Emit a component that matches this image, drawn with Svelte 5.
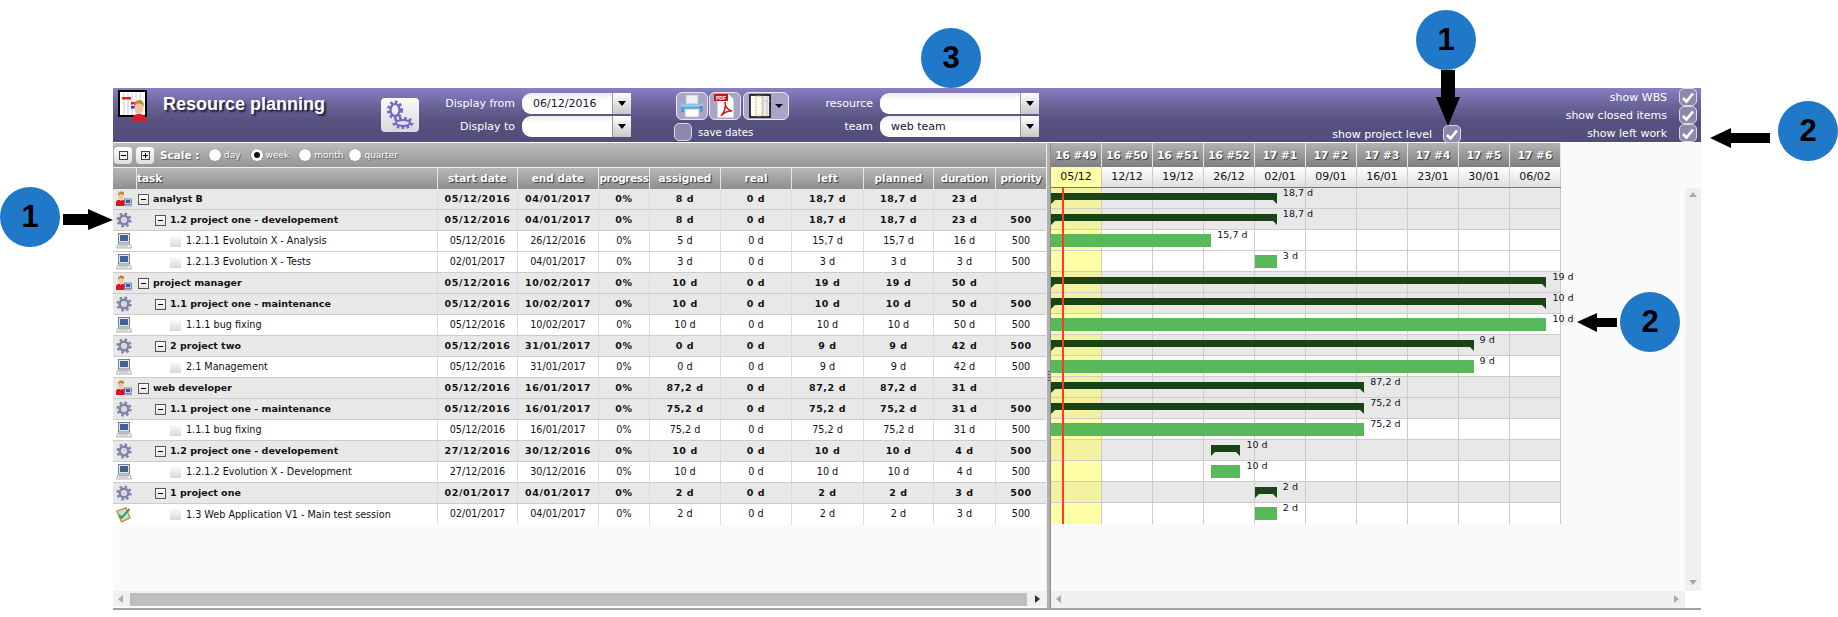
<script lang="ts">
  const DAY = 51 / 7;
  const dayIndex = (d: string) => {
    const [dd, mm, yy] = d.split("/").map(Number);
    return Math.round((Date.UTC(yy, mm - 1, dd) - Date.UTC(2016, 11, 5)) / 86400000);
  };

  // kind: res = resource, prj = project, act = activity, test = test session
  const row = (kind, level, name, start, end, assigned, left, planned, duration, priority = "500") => ({
    kind, level, name, start, end, assigned, left, planned, duration, priority,
    group: kind === "res" || kind === "prj"
  });

  const rows = [
    row("res", 0, "analyst B", "05/12/2016", "04/01/2017", "8 d", "18,7 d", "18,7 d", "23 d", ""),
    row("prj", 1, "1.2 project one - developement", "05/12/2016", "04/01/2017", "8 d", "18,7 d", "18,7 d", "23 d"),
    row("act", 2, "1.2.1.1 Evolutoin X - Analysis", "05/12/2016", "26/12/2016", "5 d", "15,7 d", "15,7 d", "16 d"),
    row("act", 2, "1.2.1.3 Evolution X - Tests", "02/01/2017", "04/01/2017", "3 d", "3 d", "3 d", "3 d"),
    row("res", 0, "project manager", "05/12/2016", "10/02/2017", "10 d", "19 d", "19 d", "50 d", ""),
    row("prj", 1, "1.1 project one - maintenance", "05/12/2016", "10/02/2017", "10 d", "10 d", "10 d", "50 d"),
    row("act", 2, "1.1.1 bug fixing", "05/12/2016", "10/02/2017", "10 d", "10 d", "10 d", "50 d"),
    row("prj", 1, "2 project two", "05/12/2016", "31/01/2017", "0 d", "9 d", "9 d", "42 d"),
    row("act", 2, "2.1 Management", "05/12/2016", "31/01/2017", "0 d", "9 d", "9 d", "42 d"),
    row("res", 0, "web developer", "05/12/2016", "16/01/2017", "87,2 d", "87,2 d", "87,2 d", "31 d", ""),
    row("prj", 1, "1.1 project one - maintenance", "05/12/2016", "16/01/2017", "75,2 d", "75,2 d", "75,2 d", "31 d"),
    row("act", 2, "1.1.1 bug fixing", "05/12/2016", "16/01/2017", "75,2 d", "75,2 d", "75,2 d", "31 d"),
    row("prj", 1, "1.2 project one - developement", "27/12/2016", "30/12/2016", "10 d", "10 d", "10 d", "4 d"),
    row("act", 2, "1.2.1.2 Evolution X - Development", "27/12/2016", "30/12/2016", "10 d", "10 d", "10 d", "4 d"),
    row("prj", 1, "1 project one", "02/01/2017", "04/01/2017", "2 d", "2 d", "2 d", "3 d"),
    row("test", 2, "1.3 Web Application V1 - Main test session", "02/01/2017", "04/01/2017", "2 d", "2 d", "2 d", "3 d")
  ];

  const weeks = [
    ["16 #49", "05/12"], ["16 #50", "12/12"], ["16 #51", "19/12"], ["16 #52", "26/12"], ["17 #1", "02/01"],
    ["17 #2", "09/01"], ["17 #3", "16/01"], ["17 #4", "23/01"], ["17 #5", "30/01"], ["17 #6", "06/02"]
  ];

  const barLeft = (r) => dayIndex(r.start) * DAY;
  const barWidth = (r) => (dayIndex(r.end) - dayIndex(r.start) + 1) * DAY;
</script>

{#snippet gear(size, fill)}
  <svg width={size} height={size} viewBox="0 0 16 16">
    <circle cx="8" cy="8" r="6.400" fill="none" stroke={fill} stroke-width="2.400" stroke-dasharray="2.500 2.500" />
    <circle cx="8" cy="8" r="4.300" fill="none" stroke={fill} stroke-width="2.600" />
    <circle cx="8" cy="8" r="2.400" fill="#d4d6e2" />
  </svg>
{/snippet}

{#snippet person()}
  <svg width="16" height="16" viewBox="0 0 16 16">
    <path d="M0 15v-3.500c0-1.600 1.400-2.500 3-2.800l2 1 2-1c1 .2 2 .8 2 2V15z" fill="#d8141c" />
    <ellipse cx="5" cy="5" rx="2.600" ry="3.400" fill="#eec79a" />
    <path d="M2.200 5C1.700 1.500 4 .5 5.500.5c2 0 3 1.500 2.500 3.500C7 3 5 3.500 3.500 3z" fill="#b8822f" />
    <rect x="8.500" y="8" width="7" height="5.500" fill="#dfe3ea" stroke="#59627a" stroke-width=".7" />
    <rect x="9.700" y="9" width="4.600" height="3.200" fill="#2f5ea8" />
    <rect x="8" y="14" width="8" height="1.500" fill="#aeb3bd" />
  </svg>
{/snippet}

{#snippet computer()}
  <svg width="16" height="16" viewBox="0 0 16 16">
    <rect x="2.500" y=".5" width="11" height="9.500" fill="#e4e6ea" stroke="#7a7e8a" />
    <rect x="4" y="2" width="8" height="6" fill="#3f6299" />
    <path d="M1.500 11.500h13l1 3.500H.5z" fill="#f0efe8" stroke="#a0a2a8" stroke-width=".8" />
    <path d="M3 13h9" stroke="#b4b6bc" />
  </svg>
{/snippet}

{#snippet testIcon()}
  <svg width="16" height="16" viewBox="0 0 16 16">
    <path d="M.8 4 10 .8l4 10-8.500 4z" fill="#c9dcef" stroke="#c88a2c" stroke-width="1.300" />
    <path d="M3 8l2.500 3L13.500 2" fill="none" stroke="#3aa53a" stroke-width="2" />
  </svg>
{/snippet}

{#snippet check()}
  <span class="check">
    <svg width="14" height="13" viewBox="0 0 14 13">
      <path d="M2 7l3.500 3.500L12 2.500" fill="none" stroke="#fff" stroke-width="2.600" />
    </svg>
  </span>
{/snippet}

{#snippet combo(value)}
  <span class="combo"><span class="combo-value">{value}</span><span class="combo-btn"></span></span>
{/snippet}

<div class="page">
  <section class="planning">
    <header class="top">
      <svg class="logo" width="32" height="32" viewBox="0 0 32 32">
        <rect x="1" y="1" width="27" height="25" fill="#fff" stroke="#000" stroke-width="2" />
        <path d="M6 3v22M10 3v22M14 3v22M18 3v22M22 3v22" stroke="#c8c8d0" />
        <rect x="4" y="7" width="9" height="2.500" fill="#ee1c25" />
        <rect x="13" y="12" width="8" height="2.500" fill="#ee1c25" />
        <rect x="13" y="16" width="8" height="2.500" fill="#1c2cee" />
        <path d="M14 32v-3c0-3 3-4 5-5h4c2 1 5 2 5 5v3z" fill="#d81c28" />
        <ellipse cx="21" cy="18" rx="4.500" ry="6" fill="#eec79a" />
        <path d="M16.500 17c-1-5 2-7 5-7s5 2 4 7c-1-3-3-3.500-5-3.500s-3 1-4 3.500z" fill="#b8913f" />
      </svg>
      <h1>Resource planning</h1>
      <span class="gear-btn">
        <svg width="28" height="30" viewBox="0 0 28 30">
          <g fill="none" stroke="#7068c4">
            <ellipse cx="9" cy="10" rx="6.500" ry="8" stroke-width="3" stroke-dasharray="2.600 2.200" />
            <ellipse cx="9" cy="10" rx="4.500" ry="6" stroke-width="2.200" />
            <ellipse cx="17" cy="23" rx="9" ry="4.600" stroke-width="3" stroke-dasharray="2.600 2.200" />
            <ellipse cx="17" cy="23" rx="7" ry="3" stroke-width="2" />
          </g>
        </svg>
      </span>

      <div class="form dates">
        <label>Display from</label>{@render combo("06/12/2016")}
        <label>Display to</label>{@render combo("")}
      </div>

      <div class="actions">
        <div class="action-row">
          <span class="tool">
            <svg width="26" height="24" viewBox="0 0 26 24">
              <rect x="7" y="1" width="12" height="9" fill="#eef2f6" stroke="#b8c0cc" />
              <path d="M2 10h22v8H2z" fill="#4aa3df" />
              <path d="M2 10h22v3H2z" fill="#8cc8ee" />
              <rect x="6" y="15" width="14" height="8" fill="#fff" stroke="#b8c0cc" />
              <rect x="21" y="12" width="2" height="1.500" fill="#e03030" />
            </svg>
          </span>
          <span class="tool">
            <svg width="24" height="26" viewBox="0 0 24 26">
              <path d="M4 1h12l5 5v19H4z" fill="#fff" stroke="#a8a8b0" />
              <rect x="1" y="1" width="14" height="7" fill="#c8141c" />
              <text x="8" y="6.500" text-anchor="middle" class="pdf">PDF</text>
              <path d="M8 23c4-4 5-10 4-14 0 5 3 8 7 9-4 0-8 1-11 5z" fill="none" stroke="#d8141c" stroke-width="1.500" />
            </svg>
          </span>
          <span class="tool wide">
            <svg width="22" height="24" viewBox="0 0 22 24">
              <rect x="1" y="1" width="20" height="22" fill="#eee" stroke="#000" stroke-width="1.500" />
              <rect x="2" y="2" width="5" height="20" fill="#fff" />
              <rect x="7" y="2" width="6" height="20" fill="#fff" stroke="#e0a020" stroke-dasharray="1.500 1" />
              <path d="M14 2v20M18 2v20" stroke="#c0c0c0" />
              <path d="M14 7h7" stroke="#c0c0c0" />
            </svg>
            <i class="caret"></i>
          </span>
        </div>
        <div class="save"><span class="check"></span><span>save dates</span></div>
      </div>

      <div class="form links">
        <label>resource</label>{@render combo("")}
        <label>team</label>{@render combo("web team")}
      </div>

      <div class="show-project">
        <span>show project level</span>{@render check()}
      </div>

      <div class="show-list">
        <div><span>show WBS</span>{@render check()}</div>
        <div><span>show closed items</span>{@render check()}</div>
        <div><span>show left work</span>{@render check()}</div>
      </div>
    </header>

    <div class="main">
      <div class="left">
        <div class="toolbar">
          <span class="tb-btn"><i class="box"><i class="h"></i></i></span>
          <span class="tb-btn second"><i class="box"><i class="h"></i><i class="v"></i></i></span>
          <strong>Scale :</strong>
          <span class="radio"></span><span class="opt">day</span>
          <span class="radio on"></span><span class="opt">week</span>
          <span class="radio"></span><span class="opt tight">month</span>
          <span class="radio"></span><span class="opt">quarter</span>
        </div>
        <div class="cols head">
          <span></span>
          <span class="task-head">task</span>
          <span>start date</span>
          <span>end date</span>
          <span>progress</span>
          <span>assigned</span>
          <span>real</span>
          <span>left</span>
          <span>planned</span>
          <span>duration</span>
          <span>priority</span>
        </div>
        <div class="list">
          {#each rows as r}
            <div class="cols line" class:group={r.group}>
              <span class="ico">
                {#if r.kind === "res"}{@render person()}
                {:else if r.kind === "prj"}{@render gear(16, "#8083a8")}
                {:else if r.kind === "act"}{@render computer()}
                {:else}{@render testIcon()}{/if}
              </span>
              <span class="name lvl{r.level}">
                {#if r.group}<i class="toggle"></i>{:else}<i class="leaf"></i>{/if}
                <em>{r.name}</em>
              </span>
              <span>{r.start}</span>
              <span>{r.end}</span>
              <span>0%</span>
              <span>{r.assigned}</span>
              <span>0 d</span>
              <span>{r.left}</span>
              <span>{r.planned}</span>
              <span>{r.duration}</span>
              <span>{r.priority}</span>
            </div>
          {/each}
        </div>
        <div class="hscroll">
          <i class="arrow-l"></i>
          <span class="thumb"></span>
          <i class="arrow-r dark"></i>
        </div>
      </div>

      <div class="splitter"><i></i></div>

      <div class="right">
        <div class="gantt-head">
          <div class="weeks">
            {#each weeks as w}<span>{w[0]}</span>{/each}
          </div>
          <div class="days">
            {#each weeks as w, i}<span class:today={i === 0}>{w[1]}</span>{/each}
          </div>
        </div>
        <div class="gantt-body">
          <div class="gantt">
            {#each rows as r}
              <div class="g-line" class:group={r.group}>
                {#each weeks as w, i}<span class="g-cell" class:today={i === 0}></span>{/each}
                {#if r.group}
                  <i class="bar summary" style="left:{barLeft(r)}px;width:{barWidth(r)}px"></i>
                {:else}
                  <i class="bar work" style="left:{barLeft(r)}px;width:{barWidth(r)}px"></i>
                {/if}
                <b class="bar-label" style="left:{barLeft(r) + barWidth(r) + 6}px">{r.left}</b>
              </div>
            {/each}
            <i class="now"></i>
          </div>
          <div class="vscroll"><i class="arrow-u"></i><i class="arrow-d"></i></div>
        </div>
        <div class="g-foot">
          <div class="hscroll g"><i class="arrow-l"></i><i class="arrow-r"></i></div>
          <span class="corner"></span>
        </div>
      </div>
    </div>
  </section>

  <!-- callouts pasted over the screenshot -->
  <div class="badge" style="left:921px;top:28px">3</div>
  <div class="badge" style="left:1416px;top:10px">1</div>
  <div class="badge" style="left:1778px;top:101px">2</div>
  <div class="badge" style="left:0;top:187px">1</div>
  <div class="badge" style="left:1620px;top:292px">2</div>
  <svg class="callout" width="1838" height="617" viewBox="0 0 1838 617">
    <path d="M1441 70h14v27h5l-12 29-12-29h5z" />
    <path d="M1710 138l21-10v5h39v10h-39v5z" />
    <path d="M63 214h25v-5l25 11-25 10v-5H63z" />
    <path d="M1577 322l20-9v5h20v9h-20v5z" />
  </svg>
</div>

<style>
  :global(body) {
    margin: 0;
    background: #fff;
  }

  .page {
    position: relative;
    width: 1838px;
    height: 617px;
    padding: 88px 0 0 113px;
    box-sizing: border-box;
    overflow: hidden;
    font-family: "DejaVu Sans", sans-serif;
    font-size: 9px;
    color: #111;
  }

  .planning {
    width: 1588px;
    height: 520px;
    display: flex;
    flex-direction: column;
    border-bottom: 2px solid #a0a0a0;
    box-sizing: content-box;
  }

  /* top bar */
  .top {
    position: relative;
    height: 54px;
    flex: none;
    display: flex;
    align-items: flex-start;
    background: linear-gradient(#8880c6, #6a6499 32%, #56517f 62%, #524e7c);
    border-bottom: 1px solid #fff;
    color: #fff;
  }

  .logo {
    margin: 2px 0 0 5px;
    flex: none;
  }

  h1 {
    width: 218px;
    flex: none;
    margin: 6px 0 0 13px;
    font-family: "Liberation Sans", sans-serif;
    font-size: 18px;
    line-height: 20px;
    font-weight: 700;
    white-space: nowrap;
    text-shadow: 2px 2px 2px #1c1a38;
  }

  .gear-btn {
    flex: none;
    width: 38px;
    height: 34px;
    margin-top: 10px;
    display: flex;
    align-items: center;
    justify-content: center;
    border-radius: 4px;
    background: linear-gradient(#fafafa, #d8d8d8);
  }

  .form {
    display: grid;
    row-gap: 2px;
    align-items: center;
    margin-top: 5px;
    flex: none;
    font-family: "DejaVu Sans", sans-serif;
    font-size: 11px;
  }

  .form label {
    text-align: right;
    padding-right: 7px;
    white-space: nowrap;
  }

  .dates {
    grid-template-columns: 103px 109px;
  }

  .links {
    grid-template-columns: 91px 159px;
  }

  .combo {
    display: flex;
    height: 21px;
    box-sizing: border-box;
    background: linear-gradient(#ececec, #fff 35%);
    border-radius: 9px 0 0 9px;
    color: #1a1030;
  }

  .combo-value {
    flex: 1;
    padding-left: 11px;
    line-height: 21px;
  }

  .combo-btn {
    position: relative;
    width: 19px;
    flex: none;
    background: linear-gradient(#fff, #c8c8c8);
    border-left: 1px solid #999;
    box-sizing: border-box;
  }

  .combo-btn::after {
    content: "";
    position: absolute;
    left: 5px;
    top: 8px;
    border: 4px solid transparent;
    border-top: 5px solid #000;
    border-bottom: 0;
  }

  .actions {
    flex: none;
    width: 115px;
    margin: 4px 0 0 43px;
  }

  .action-row {
    display: flex;
    gap: 1px;
    margin-left: 2px;
  }

  .tool {
    width: 32px;
    height: 28px;
    box-sizing: border-box;
    display: flex;
    align-items: center;
    justify-content: center;
    border: 1px solid #e8e8f0;
    border-radius: 6px;
    background: #a9a5c9;
    flex: none;
  }

  .tool.wide {
    width: 46px;
    margin-left: 1px;
    gap: 4px;
  }

  .caret {
    border: 4px solid transparent;
    border-top: 4px solid #000;
    border-bottom: 0;
  }

  .save {
    display: flex;
    align-items: center;
    gap: 6px;
    margin-top: 3px;
    font-size: 10.2px;
  }

  .check {
    width: 18px;
    height: 18px;
    flex: none;
    box-sizing: border-box;
    display: inline-flex;
    align-items: center;
    justify-content: center;
    border: 1px solid #d8d8e4;
    border-radius: 5px;
    background: #8d89ad;
  }

  .show-project {
    position: absolute;
    right: 240px;
    top: 37px;
    display: flex;
    align-items: center;
    gap: 11px;
    font-size: 11px;
  }

  .show-list {
    margin-left: auto;
    margin-right: 4px;
    display: flex;
    flex-direction: column;
    align-items: flex-end;
    font-size: 11px;
  }

  .show-list div {
    display: flex;
    align-items: center;
    gap: 12px;
    height: 18px;
  }

  /* panels */
  .main {
    flex: 1;
    display: flex;
    min-height: 0;
    background: #fafafa;
  }

  .left {
    width: 933px;
    flex: none;
    display: flex;
    flex-direction: column;
  }

  .splitter {
    width: 5px;
    flex: none;
    position: relative;
    background: #ececec;
    box-sizing: border-box;
    border-left: 1px solid #eee;
    border-right: 1px solid #8c8c8c;
    box-shadow: inset -3px 0 0 #b0b0b0;
  }

  .splitter i {
    position: absolute;
    left: 1px;
    top: 228px;
    width: 2px;
    height: 12px;
    background: repeating-linear-gradient(#555 0 1px, transparent 1px 3px);
  }

  .right {
    flex: 1;
    min-width: 0;
    display: flex;
    flex-direction: column;
  }

  .toolbar {
    height: 24px;
    flex: none;
    display: flex;
    align-items: center;
    padding-left: 1px;
    background: linear-gradient(#bcbcbc, #969696);
    border-bottom: 1px solid #f0f0f0;
    color: #fff;
    text-shadow: 1px 1px 1px #555;
  }

  .tb-btn {
    width: 18px;
    height: 17px;
    display: flex;
    align-items: center;
    justify-content: center;
    box-sizing: border-box;
    border-radius: 4px;
    background: linear-gradient(#fff, #ddd);
  }

  .tb-btn.second {
    margin-left: 4px;
  }

  .box {
    position: relative;
    width: 9px;
    height: 9px;
    box-sizing: border-box;
    border: 1px solid #444;
    background: #f4f4f4;
  }

  .box .h {
    position: absolute;
    left: 1px;
    top: 3px;
    width: 5px;
    height: 1px;
    background: #000;
  }

  .box .v {
    position: absolute;
    left: 3px;
    top: 1px;
    width: 1px;
    height: 5px;
    background: #000;
  }

  .toolbar strong {
    margin: 0 9px 0 6px;
    font-size: 10.5px;
    width: 40px;
    white-space: nowrap;
  }

  .radio {
    position: relative;
    width: 12px;
    height: 12px;
    flex: none;
    border-radius: 50%;
    background: #fff;
    box-shadow: 0 0 1px #555;
  }

  .radio.on::after {
    content: "";
    position: absolute;
    inset: 3px;
    border-radius: 50%;
    background: #111;
  }

  .opt {
    margin: 0 10px 0 3px;
    font-size: 9px;
  }

  .opt.tight {
    margin-right: 6px;
  }

  .cols {
    display: grid;
    grid-template-columns: 24px 301px 80px 81px 51px 71px 71px 72px 70px 62px 50px;
    align-items: center;
  }

  .head {
    height: 21px;
    flex: none;
    background: linear-gradient(#b8b8b8, #8e8e8e);
    color: #fff;
    font-size: 10.5px;
    font-weight: 700;
    text-align: center;
    text-shadow: 1px 1px 1px #333;
    white-space: nowrap;
  }

  .head span {
    height: 100%;
    line-height: 21px;
    border-right: 1px solid #e8e8e8;
    box-sizing: border-box;
    overflow: hidden;
  }

  .head span:nth-child(5),
  .head span:nth-child(10),
  .head span:nth-child(11) {
    letter-spacing: -0.4px;
  }

  .head .task-head {
    text-align: left;
  }

  .head span:last-child {
    border-right: 0;
  }

  .list {
    flex: 1;
    min-height: 0;
  }

  .line {
    height: 21px;
    box-sizing: border-box;
    background: #fff;
    border-bottom: 1px solid #ccc;
    text-align: center;
    font-size: 9.65px;
    line-height: 20px;
  }

  .line:last-child,
  .g-line:nth-last-child(2) {
    border-bottom: 0;
  }

  .line > span {
    height: 100%;
    box-sizing: border-box;
    border-right: 1px solid #ddd;
  }

  .line > span:last-child {
    border-right: 0;
  }

  .line.group {
    background: #e8e8e8;
    font-weight: 700;
    font-size: 9.5px;
  }

  .line.group > span:not(.name) {
    letter-spacing: 0.6px;
  }

  .line > .ico {
    display: flex;
    align-items: center;
    padding-left: 3px;
    border-right: 0;
  }

  .line > .name {
    display: flex;
    align-items: center;
    text-align: left;
  }

  .name em {
    font-style: normal;
    white-space: nowrap;
  }

  .lvl0 {
    padding-left: 1px;
  }

  .lvl1 {
    padding-left: 18px;
  }

  .lvl2 {
    padding-left: 33px;
  }

  .toggle {
    position: relative;
    width: 11px;
    height: 11px;
    flex: none;
    box-sizing: border-box;
    margin-right: 4px;
    border: 1px solid #555;
    background: linear-gradient(#fff, #e4e4e4);
  }

  .toggle::after {
    content: "";
    position: absolute;
    left: 2px;
    top: 4px;
    width: 5px;
    height: 1px;
    background: #000;
  }

  .leaf {
    width: 11px;
    height: 11px;
    flex: none;
    margin-right: 5px;
    background: linear-gradient(#fafafa, #d8d8d8);
  }

  .hscroll {
    position: relative;
    height: 15px;
    flex: none;
    margin-bottom: 2px;
    background: #f0f0f0;
  }

  .thumb {
    position: absolute;
    left: 17px;
    right: 19px;
    top: 2px;
    bottom: 0;
    background: #bebebe;
  }

  .arrow-l,
  .arrow-r {
    position: absolute;
    top: 4px;
    border: 4px solid transparent;
  }

  .arrow-l {
    left: 5px;
    border-left: 0;
    border-right: 5px solid #aaa;
  }

  .arrow-r {
    right: 6px;
    border-right: 0;
    border-left: 5px solid #aaa;
  }

  .arrow-r.dark {
    border-left-color: #333;
  }

  /* gantt */
  .gantt-head {
    flex: none;
    width: 510px;
  }

  .weeks,
  .days,
  .g-line {
    display: grid;
    grid-template-columns: repeat(10, 51px);
  }

  .weeks {
    height: 24px;
    background: linear-gradient(#b2b2b2, #808080);
    color: #fff;
    font-size: 10.5px;
    font-weight: 700;
    text-shadow: 1px 1px 1px #333;
  }

  .weeks span {
    line-height: 24px;
    text-align: center;
    white-space: nowrap;
    border-right: 1px solid #e4e4e4;
    box-sizing: border-box;
  }

  .days {
    height: 21px;
    font-size: 11px;
    background: linear-gradient(#fff, #dedede);
    border-bottom: 1px solid #777;
    box-sizing: border-box;
  }

  .days span {
    line-height: 20px;
    text-align: center;
    border-right: 1px solid #ccc;
    box-sizing: border-box;
  }

  .days .today {
    background: #ffffa6;
  }

  .gantt-body {
    flex: 1;
    min-height: 0;
    display: flex;
    justify-content: space-between;
  }

  .gantt {
    position: relative;
    width: 510px;
    align-self: flex-start;
  }

  .g-line {
    position: relative;
    height: 21px;
    box-sizing: border-box;
    background: #fff;
    border-bottom: 1px solid #ccc;
  }

  .g-line.group {
    background: #e8e8e8;
  }

  .g-cell {
    border-right: 1px solid #ccc;
    box-sizing: border-box;
  }

  .g-cell.today {
    background: #ffffa6;
  }

  .g-line.group .g-cell.today {
    background: #f2f2a2;
  }

  .bar {
    position: absolute;
  }

  .work {
    top: 4px;
    height: 13px;
    background: #58b85a;
  }

  .summary {
    top: 5px;
    height: 7px;
    background: #1a4316;
  }

  .summary::before,
  .summary::after {
    content: "";
    position: absolute;
    top: 7px;
    border-top: 4px solid #1a4316;
  }

  .summary::before {
    left: 0;
    border-right: 4px solid transparent;
  }

  .summary::after {
    right: 0;
    border-left: 4px solid transparent;
  }

  .bar-label {
    position: absolute;
    top: -1px;
    font-weight: 400;
    font-size: 9.5px;
    line-height: 12px;
    color: #101030;
    white-space: nowrap;
  }

  .now {
    position: absolute;
    left: 11px;
    top: 0;
    bottom: 0;
    width: 2px;
    background: #ff3a20;
  }

  .vscroll {
    position: relative;
    width: 16px;
    flex: none;
    background: #f0f0f0;
  }

  .arrow-u,
  .arrow-d {
    position: absolute;
    left: 4px;
    border: 4px solid transparent;
  }

  .arrow-u {
    top: 4px;
    border-top: 0;
    border-bottom: 5px solid #aaa;
  }

  .arrow-d {
    bottom: 6px;
    border-bottom: 0;
    border-top: 5px solid #aaa;
  }

  .g-foot {
    display: flex;
    flex: none;
  }

  .hscroll.g {
    flex: 1;
    margin-bottom: 0;
    height: 17px;
  }

  .corner {
    width: 16px;
    background: #fff;
  }

  .pdf {
    font-family: "Liberation Sans", sans-serif;
    font-size: 5px;
    font-weight: 700;
    fill: #fff;
  }

  /* annotations */
  .badge {
    position: absolute;
    width: 60px;
    height: 60px;
    border-radius: 50%;
    background: #1f78c8;
    color: #000;
    font-family: "Liberation Sans", sans-serif;
    font-size: 31px;
    font-weight: 700;
    line-height: 60px;
    text-align: center;
  }

  .callout {
    position: absolute;
    left: 0;
    top: 0;
    pointer-events: none;
  }
</style>
